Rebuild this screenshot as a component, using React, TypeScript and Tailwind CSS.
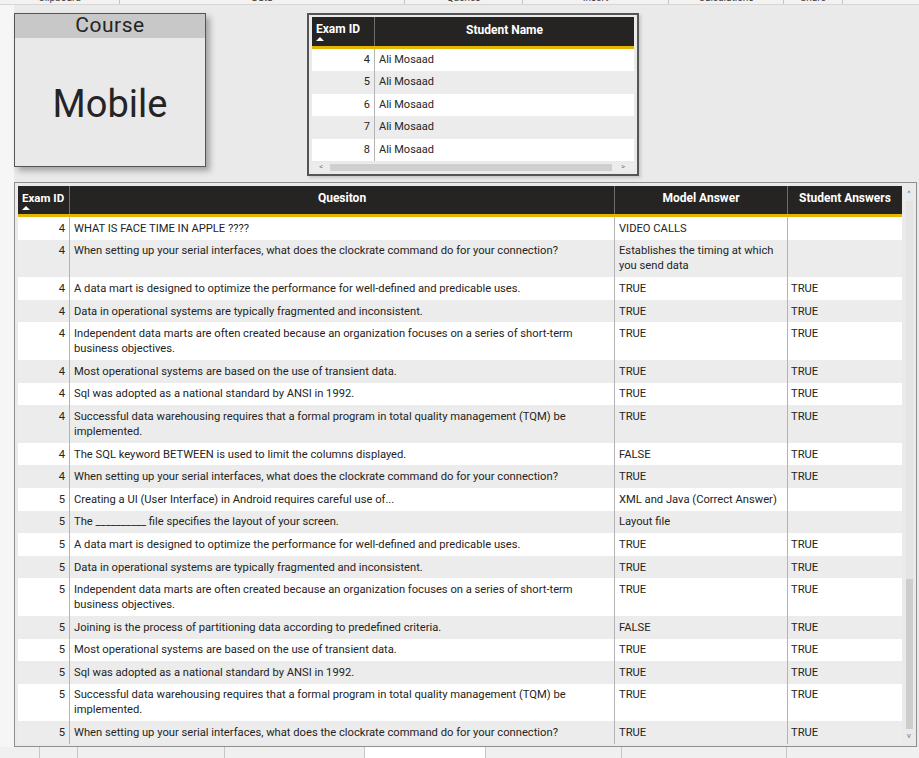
import React from "react";

type Row = { id: number; q: string; model: string; student: string; tall?: boolean };

const rows: Row[] = [
  { id: 4, q: "WHAT IS FACE TIME IN APPLE ????", model: "VIDEO CALLS", student: "" },
  { id: 4, q: "When setting up your serial interfaces, what does the clockrate command do for your connection?", model: "Establishes the timing at which\nyou send data", student: "", tall: true },
  { id: 4, q: "A data mart is designed to optimize the performance for well-defined and predicable uses.", model: "TRUE", student: "TRUE" },
  { id: 4, q: "Data in operational systems are typically fragmented and inconsistent.", model: "TRUE", student: "TRUE" },
  { id: 4, q: "Independent data marts are often created because an organization focuses on a series of short-term\nbusiness objectives.", model: "TRUE", student: "TRUE", tall: true },
  { id: 4, q: "Most operational systems are based on the use of transient data.", model: "TRUE", student: "TRUE" },
  { id: 4, q: "Sql was adopted as a national standard by ANSI in 1992.", model: "TRUE", student: "TRUE" },
  { id: 4, q: "Successful data warehousing requires that a formal program in total quality management (TQM) be\nimplemented.", model: "TRUE", student: "TRUE", tall: true },
  { id: 4, q: "The SQL keyword BETWEEN is used to limit the columns displayed.", model: "FALSE", student: "TRUE" },
  { id: 4, q: "When setting up your serial interfaces, what does the clockrate command do for your connection?", model: "TRUE", student: "TRUE" },
  { id: 5, q: "Creating a UI (User Interface) in Android requires careful use of...", model: "XML and Java (Correct Answer)", student: "" },
  { id: 5, q: "The __________ file specifies the layout of your screen.", model: "Layout file", student: "" },
  { id: 5, q: "A data mart is designed to optimize the performance for well-defined and predicable uses.", model: "TRUE", student: "TRUE" },
  { id: 5, q: "Data in operational systems are typically fragmented and inconsistent.", model: "TRUE", student: "TRUE" },
  { id: 5, q: "Independent data marts are often created because an organization focuses on a series of short-term\nbusiness objectives.", model: "TRUE", student: "TRUE", tall: true },
  { id: 5, q: "Joining is the process of partitioning data according to predefined criteria.", model: "FALSE", student: "TRUE" },
  { id: 5, q: "Most operational systems are based on the use of transient data.", model: "TRUE", student: "TRUE" },
  { id: 5, q: "Sql was adopted as a national standard by ANSI in 1992.", model: "TRUE", student: "TRUE" },
  { id: 5, q: "Successful data warehousing requires that a formal program in total quality management (TQM) be\nimplemented.", model: "TRUE", student: "TRUE", tall: true },
  { id: 5, q: "When setting up your serial interfaces, what does the clockrate command do for your connection?", model: "TRUE", student: "TRUE" },
];

const students = [4, 5, 6, 7, 8];

const ribbon = [
  { label: "Clipboard", w: 120 },
  { label: "Data", w: 285 },
  { label: "Queries", w: 118 },
  { label: "Insert", w: 146 },
  { label: "Calculations", w: 115 },
  { label: "Share", w: 59 },
];

function SortArrow() {
  return <div className="mt-[1px] h-0 w-0 border-x-[4px] border-b-[4px] border-x-transparent border-b-white" />;
}

export default function App() {
  return (
    <div className="flex h-[758px] w-[919px] flex-col overflow-hidden bg-[#eaeaea] text-[#252423]" style={{ fontFamily: "Roboto, 'Noto Sans', sans-serif" }}>
      {/* ribbon remnants */}
      <div className="flex h-[5px] shrink-0 overflow-hidden border-b border-[#d6d6d6] bg-[#f3f2f1]">
        {ribbon.map((r) => (
          <div key={r.label} style={{ width: r.w }} className="relative h-full border-r border-[#c8c6c4]">
            <div className="absolute bottom-[1px] left-0 right-0 text-center text-[10px] leading-[10px] text-[#444]">{r.label}</div>
          </div>
        ))}
      </div>

      <div className="flex flex-1">
        <div className="w-[14px] shrink-0 bg-[#f6f6f6]" />
        <div className="flex flex-1 flex-col pt-[8px]">
          <div className="flex">
            {/* Course card */}
            <div className="flex h-[154px] w-[192px] flex-col border border-[#555] bg-[#e9e9e9] shadow-[4px_4px_6px_rgba(0,0,0,0.3)]">
              <div className="flex h-[24px] items-center justify-center bg-[#c8c8c8] text-[21px] tracking-[0.5px] text-[#252423]">Course</div>
              <div className="flex flex-1 items-center justify-center pt-[4px] text-[38px] text-[#252423]">Mobile</div>
            </div>

            {/* Student table */}
            <div className="ml-[101px] flex h-[163px] w-[332px] flex-col border-2 border-[#555] bg-[#eaeaea] px-[3px] pt-[2px] shadow-[2px_2px_3px_rgba(0,0,0,0.15)]">
              <div className="flex h-[29px] bg-[#252423] text-[12px] font-bold text-white">
                <div className="flex w-[63px] flex-col justify-center border-r border-[#6e6e6e] px-[4px] pt-[1px]">
                  <span className="whitespace-nowrap leading-[13px]">Exam ID</span>
                  <SortArrow />
                </div>
                <div className="flex flex-1 items-center justify-center pb-[4px]">Student Name</div>
              </div>
              <div className="h-[3px] bg-[#e3b505]" />
              {students.map((s, i) => (
                <div key={s} className={`flex h-[22.4px] items-center text-[11px] ${i % 2 ? "bg-[#ececec]" : "bg-white"}`}>
                  <div className="flex h-full w-[63px] items-center justify-end border-r border-[#b4b4b4] pr-[4px]">{s}</div>
                  <div className="pl-[4px]">Ali Mosaad</div>
                </div>
              ))}
              <div className="mt-[2px] flex h-[9px] items-center bg-[#ececec] text-[8px] leading-[8px] text-[#777]">
                <span className="w-[18px] text-center">&lt;</span>
                <div className="h-[7px] flex-1 bg-[#cfcfcf]" />
                <span className="w-[22px] text-center">&gt;</span>
              </div>
            </div>
          </div>

          {/* Questions table */}
          <div className="mt-[6px] flex h-[565px] w-[903px] border border-[#8f8f8f] bg-[#eaeaea] pl-[3px] pt-[3px]">
            <div className="flex w-[884px] flex-col overflow-hidden">
              <div className="grid h-[28px] shrink-0 grid-cols-[52px_545px_173px_114px] bg-[#252423] text-[12px] font-bold text-white">
                <div className="flex flex-col justify-center border-r border-[#6e6e6e] pl-[4px] pt-[1px]">
                  <span className="whitespace-nowrap text-[11.5px] leading-[13px]">Exam ID</span>
                  <SortArrow />
                </div>
                <div className="flex items-center justify-center border-r border-[#6e6e6e] pb-[4px]">Quesiton</div>
                <div className="flex items-center justify-center border-r border-[#6e6e6e] pb-[4px]">Model Answer</div>
                <div className="flex items-center justify-center pb-[4px]">Student Answers</div>
              </div>
              <div className="h-[3px] shrink-0 bg-[#e3b505]" />
              {rows.map((r, i) => (
                <div key={i} className={`grid shrink-0 grid-cols-[52px_545px_173px_114px] text-[11.2px] leading-[15px] ${i % 2 ? "bg-[#ececec]" : "bg-white"}`}>
                  <div className="border-r border-[#b4b4b4] py-[3.8px] pr-[4px] text-right">{r.id}</div>
                  <div className="whitespace-pre-line border-r border-[#b4b4b4] py-[3.8px] pl-[4px]">{r.q}</div>
                  <div className="whitespace-pre-line border-r border-[#b4b4b4] py-[3.8px] pl-[4px]">{r.model}</div>
                  <div className="py-[3.8px] pl-[3px]">{r.student}</div>
                </div>
              ))}
            </div>
            {/* vertical scrollbar */}
            <div className="ml-[2px] flex w-[10px] flex-col items-center">
              <span className="mt-[4px] text-[8px] leading-[8px] text-[#777]">^</span>
              <div className="mt-[3px] w-[7px] flex-1 bg-[#e4e4e4] pt-[378px]">
                <div className="h-[150px] w-full bg-[#cdcdcd]" />
              </div>
              <span className="mb-[14px] mt-[3px] text-[8px] leading-[8px] text-[#777]">v</span>
            </div>
          </div>
        </div>
      </div>

      {/* page tabs */}
      <div className="flex h-[11px] shrink-0 bg-[#f0f0f0]">
        <div className="w-[40px] border-r border-[#c8c6c4]" />
        <div className="w-[38px] border-r border-[#c8c6c4]" />
        <div className="w-[147px] border-r border-[#c8c6c4]" />
        <div className="w-[140px] border-r border-[#c8c6c4]" />
        <div className="w-[121px] border-r border-[#c8c6c4] bg-white" />
        <div className="w-[136px] border-r border-[#c8c6c4]" />
        <div className="w-[165px] border-r border-[#c8c6c4]" />
      </div>
    </div>
  );
}
